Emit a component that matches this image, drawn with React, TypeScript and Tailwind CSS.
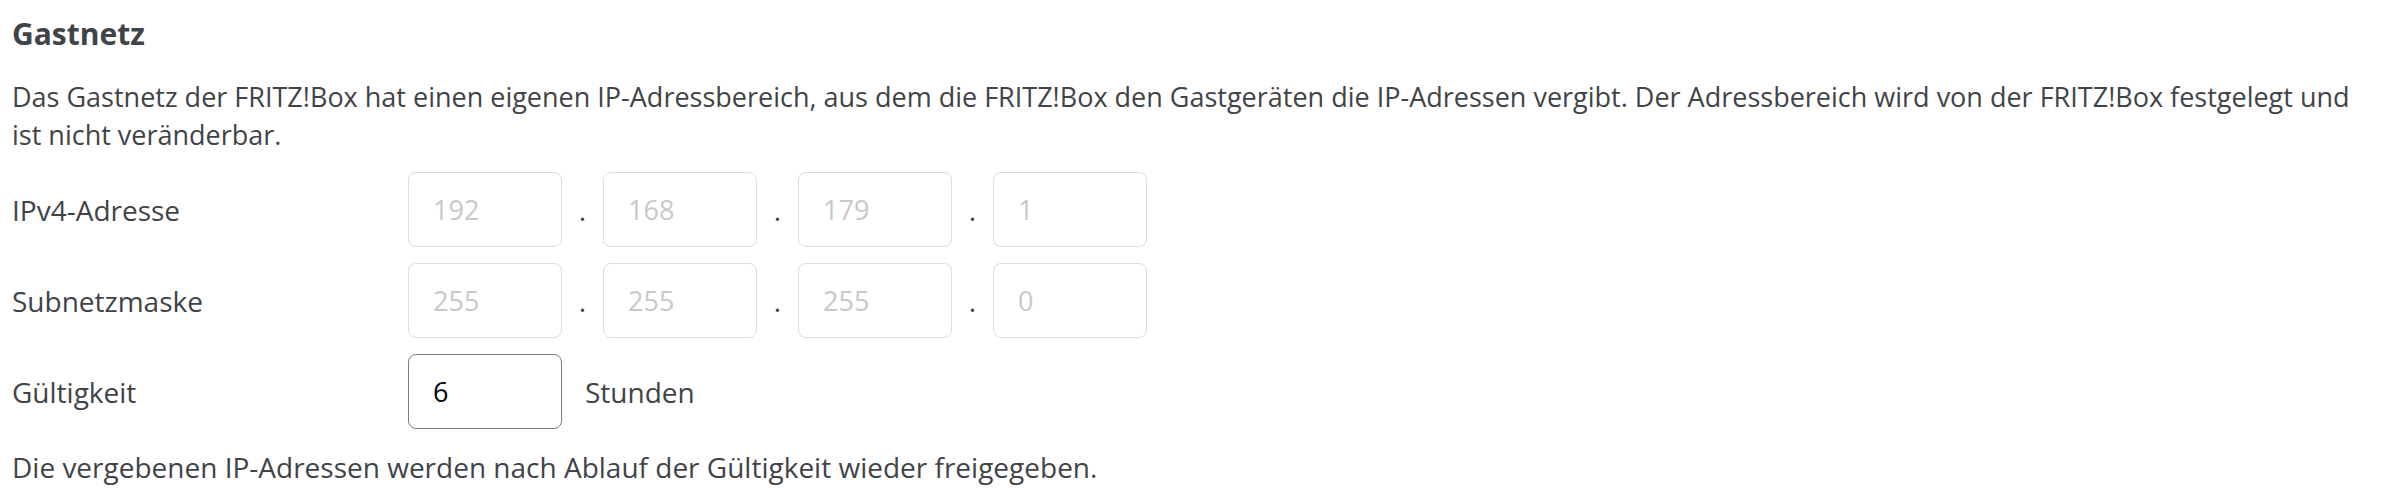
import React from "react";

const font = { fontFamily: '"Open Sans", "Noto Sans", sans-serif' };

function Box({ value, active = false }: { value: string; active?: boolean }) {
  return (
    <input
      readOnly
      disabled={!active}
      defaultValue={value}
      className={
        active
          ? "w-[154px] h-[75px] rounded-[8px] border border-[#7b7e80] bg-white pl-[24px] text-[27px] text-black outline-none"
          : "w-[154px] h-[75px] rounded-[8px] border border-[#dcdcdc] bg-white pl-[24px] text-[27px] text-[#c6c9cc] outline-none"
      }
      style={font}
    />
  );
}

function Dot() {
  return <span className="w-[41px] text-center">.</span>;
}

function IpRow({ label, parts }: { label: string; parts: string[] }) {
  return (
    <div className="flex items-center h-[75px]">
      <span className="w-[396px]">{label}</span>
      <Box value={parts[0]} />
      <Dot />
      <Box value={parts[1]} />
      <Dot />
      <Box value={parts[2]} />
      <Dot />
      <Box value={parts[3]} />
    </div>
  );
}

export default function App() {
  return (
    <div
      className="bg-white min-h-[499px] w-[2388px] px-[12px] pt-[14px] text-[28px] leading-[38px] text-[#3f4448]"
      style={font}
    >
      <h2 className="text-[30px] leading-[40px] font-bold">Gastnetz</h2>
      <p className="mt-[24px] text-[27px] leading-[38px]">
        Das Gastnetz der FRITZ!Box hat einen eigenen IP-Adressbereich, aus dem die FRITZ!Box den Gastgeräten die IP-Adressen vergibt. Der Adressbereich wird von der FRITZ!Box festgelegt und ist nicht veränderbar.
      </p>
      <div className="mt-[18px] flex flex-col gap-[16px]">
        <IpRow label="IPv4-Adresse" parts={["192", "168", "179", "1"]} />
        <IpRow label="Subnetzmaske" parts={["255", "255", "255", "0"]} />
        <div className="flex items-center h-[75px]">
          <span className="w-[396px]">Gültigkeit</span>
          <Box value="6" active />
          <span className="ml-[23px]">Stunden</span>
        </div>
      </div>
      <p className="mt-[19px]">
        Die vergebenen IP-Adressen werden nach Ablauf der Gültigkeit wieder freigegeben.
      </p>
    </div>
  );
}
